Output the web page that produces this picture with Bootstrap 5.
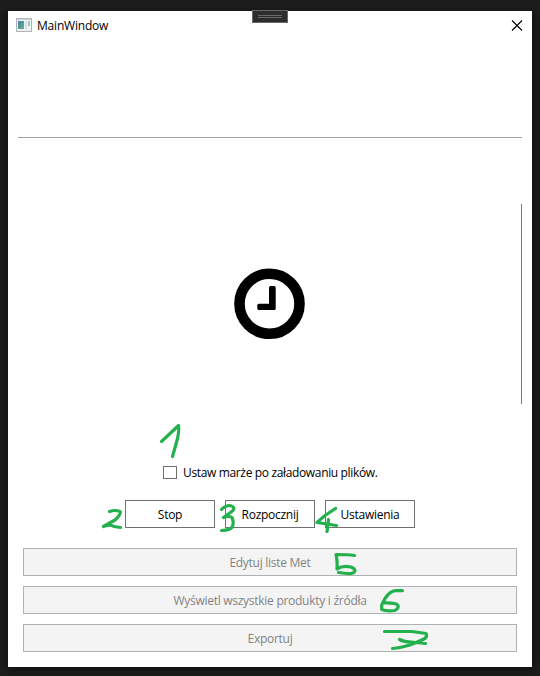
<!DOCTYPE html>
<html lang="pl">
<head>
<meta charset="utf-8">
<meta name="viewport" content="width=device-width, initial-scale=1">
<title>MainWindow</title>
<link href="https://cdn.jsdelivr.net/npm/bootstrap@5.3.0/dist/css/bootstrap.min.css" rel="stylesheet">
<style>
body{background:#1c1c1c;font:12px/16px "Open Sans","Noto Sans",sans-serif;color:#000;width:540px;height:676px;overflow:hidden}
.desk{height:676px;padding:11px 8px 9px}
.win{box-shadow:0 2px 8px #0008}
.titlebar{height:29px;padding:0 9px 0 8px}
.titlebar span{margin-left:5px;letter-spacing:-.2px}
.app-icon{margin-bottom:2px}
.grip{left:252px;top:10px;width:36px;height:13px;background:#2d2d30;border:1px solid #686868}
.head-space{height:98px;margin:0 10px;border-bottom:1px solid #a0a0a0}
.stage{height:200px;margin:66px 10px 0;border-right:1px solid #7a7a7a}
.check-row{margin-top:61px;height:16px;padding-left:155px}
.form-check-input.box{width:14px;height:13px;margin:0 0 1px;border:1px solid #707070;border-radius:0;background-color:#fff}
.check-row label{margin-left:6px;white-space:nowrap;letter-spacing:-.35px}
.actions{margin-top:19px;gap:10px}
.btn.flat{font-size:12px;line-height:16px;height:28px;padding:2px 0 0;border-radius:0;border:1px solid #707070;background:#fff;color:#000;white-space:nowrap;letter-spacing:-.27px}
.actions .btn{width:90px}
.wide{margin:20px 15px 0;gap:10px}
.btn.flat:disabled{background:#f4f4f4;border-color:#adb2b5;color:#838383;opacity:1}
.ink{left:0;top:0;pointer-events:none}
</style>
<script src="https://cdn.jsdelivr.net/npm/bootstrap@5.3.0/dist/js/bootstrap.bundle.min.js"></script>
</head>
<body>
<main class="desk position-relative">
  <div class="win bg-white h-100 d-flex flex-column">
    <header class="titlebar d-flex align-items-center">
      <svg class="app-icon" width="16" height="14" viewBox="0 0 16 14"><defs><linearGradient id="g" x2="1" y2="1"><stop stop-color="#4a82a8"/><stop offset="1" stop-color="#62b28c"/></linearGradient></defs><rect x=".5" y=".5" width="15" height="13" fill="#eef0f1" stroke="#aeb4b9"/><path d="M1 1.500h14" stroke="#cdd1d5"/><path d="M2 3h6v8H2z" fill="url(#g)"/><path d="M9 3h2v8H9z" fill="#dcdfe1"/><path d="M12 3h2v5h-2z" fill="#9bcbb5"/></svg>
      <span>MainWindow</span>
      <svg class="ms-auto" width="12" height="12" viewBox="0 0 12 12"><path d="M1 .5l10 10M11 .5L1 10.500" stroke="#000" stroke-width="1.1"/></svg>
    </header>
    <div class="head-space"></div>
    <section class="stage d-flex align-items-center justify-content-center">
      <svg width="72" height="72" viewBox="0 0 72 72"><circle cx="35.5" cy="35.8" r="30" fill="none" stroke="#000" stroke-width="10.600"/><path d="M36.500 18h3.700q1.500 0 1.500 1.500V40.500q0 1.500-1.500 1.500H24.800q-1.500 0-1.500-1.500V37.200q0-1.500 1.500-1.500H35V19.500q0-1.500 1.500-1.500z"/></svg>
    </section>
    <div class="check-row d-flex align-items-center">
      <input class="form-check-input box" type="checkbox" id="margin"><label for="margin">Ustaw marże po załadowaniu plików.</label>
    </div>
    <div class="actions d-flex justify-content-center">
      <button class="btn flat">Stop</button>
      <button class="btn flat">Rozpocznij</button>
      <button class="btn flat">Ustawienia</button>
    </div>
    <div class="wide d-flex flex-column">
      <button class="btn flat" disabled>Edytuj liste Met</button>
      <button class="btn flat" disabled>Wyświetl wszystkie produkty i źródła</button>
      <button class="btn flat" disabled>Exportuj</button>
    </div>
  </div>
  <div class="grip position-absolute d-flex align-items-center justify-content-center"><svg width="24" height="3"><path d="M0 .5h24M0 2.500h24" stroke="#686868"/></svg></div>
  <svg class="ink position-absolute" width="540" height="676" fill="none" stroke="#22b14c" stroke-width="3.200" stroke-linecap="round" stroke-linejoin="round">
    <path d="M161.500 441.500L169 434.500L178.500 425.500Q179.500 433 176 444L172.500 456.500"/>
    <path d="M109.500 511.500Q115 509.500 120 511.500Q121.500 514 115 520L103.500 526.500Q110 524 114 526.500L120.500 527.500"/>
    <path d="M221.500 509.500Q225 505.500 230 505.500Q236 507 232.500 511L223.500 517.500Q229 515.500 232 517.500Q234 522 232.500 526.500Q231 530 221.500 530.500"/>
    <path d="M335.500 508.500L325 515.500L317 522.500L336.500 525.500M328.500 519.500L327 531.500"/>
    <path d="M354.500 555.500Q348 554.500 336 554.500Q337.500 560 337 569Q343 565 351 567Q355 568.500 355 571Q354 574 347 573.500L338.500 572.500"/>
    <path d="M402.500 590.700H395.500Q390 591 385 598.500L381.700 605V609.500Q386 611.500 395 610.500Q399 608 398 605.500Q396 602.500 383 603"/>
    <path d="M384.500 631.500L412 631.500L426 633.500Q427.500 636 425 638.500Q418 642 410 645Q402 647.500 392.500 648.500M399.500 639.500Q404 642 411 642L425.500 643.500"/>
  </svg>
</main>
</body>
</html>
